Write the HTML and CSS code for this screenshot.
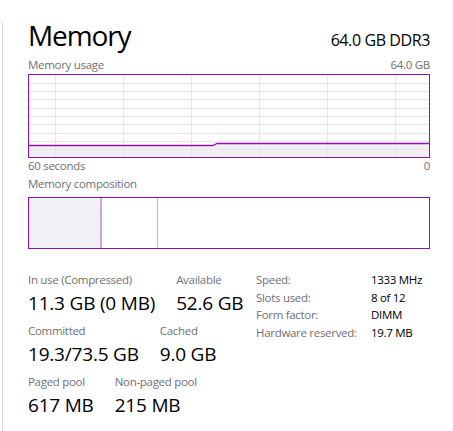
FILE: index.html
```html
<!DOCTYPE html>
<html>
<head>
<meta charset="utf-8">
<link rel="stylesheet" href="styles.css">
</head>
<body>
<div class="panel">
  <div class="head">
    <span class="title">Memory</span>
    <span class="sub">64.0 GB DDR3</span>
  </div>
  <div class="caption caption-top">
    <span>Memory usage</span>
    <span>64.0 GB</span>
  </div>
  <div class="chart">
    <svg width="400" height="82" viewBox="0 0 400 82">
      <path class="area" d="M0,70.5 L184,70.5 L188,68.5 L400,68.5 L400,82 L0,82 Z"/>
      <g class="grid">
        <line x1="26.5" y1="0" x2="26.5" y2="82"/>
        <line x1="94.5" y1="0" x2="94.5" y2="82"/>
        <line x1="162.5" y1="0" x2="162.5" y2="82"/>
        <line x1="230.5" y1="0" x2="230.5" y2="82"/>
        <line x1="298.5" y1="0" x2="298.5" y2="82"/>
        <line x1="366.5" y1="0" x2="366.5" y2="82"/>
        <line x1="0" y1="8.5" x2="400" y2="8.5"/>
        <line x1="0" y1="16.5" x2="400" y2="16.5"/>
        <line x1="0" y1="24.5" x2="400" y2="24.5"/>
        <line x1="0" y1="33.5" x2="400" y2="33.5"/>
        <line x1="0" y1="41.5" x2="400" y2="41.5"/>
        <line x1="0" y1="49.5" x2="400" y2="49.5"/>
        <line x1="0" y1="58.5" x2="400" y2="58.5"/>
        <line x1="0" y1="66.5" x2="400" y2="66.5"/>
        <line x1="0" y1="74.5" x2="400" y2="74.5"/>
      </g>
      <path class="usage" d="M0,70.5 L184,70.5 L188,68.5 L400,68.5"/>
    </svg>
  </div>
  <div class="caption caption-axis">
    <span>60 seconds</span>
    <span>0</span>
  </div>
  <div class="caption caption-comp">
    <span>Memory composition</span>
  </div>
  <div class="comp">
    <div class="seg-inuse"></div>
    <div class="seg-modified"></div>
    <div class="seg-standby"></div>
    <div class="seg-free"></div>
  </div>
  <div class="stats">
    <div class="stat-cols">
      <div class="stat-row">
        <div class="stat"><div class="label">In use (Compressed)</div><div class="value">11.3 GB (0 MB)</div></div>
        <div class="stat"><div class="label">Available</div><div class="value">52.6 GB</div></div>
      </div>
      <div class="stat-row">
        <div class="stat"><div class="label">Committed</div><div class="value">19.3/73.5 GB</div></div>
        <div class="stat"><div class="label">Cached</div><div class="value">9.0 GB</div></div>
      </div>
      <div class="stat-row">
        <div class="stat"><div class="label">Paged pool</div><div class="value">617 MB</div></div>
        <div class="stat"><div class="label">Non-paged pool</div><div class="value">215 MB</div></div>
      </div>
    </div>
    <div class="specs">
      <span class="spec-k">Speed:</span><span class="spec-v">1333 MHz</span>
      <span class="spec-k">Slots used:</span><span class="spec-v">8 of 12</span>
      <span class="spec-k">Form factor:</span><span class="spec-v">DIMM</span>
      <span class="spec-k">Hardware reserved:</span><span class="spec-v">19.7 MB</span>
    </div>
  </div>
</div>
</body>
</html>
```
FILE: styles.css
```css
html, body {
  margin: 0;
  padding: 0;
  background: #ffffff;
}
body {
  font-family: "Open Sans", "Noto Sans", sans-serif;
  color: #000;
}
.panel {
  margin: 22px 0 0 2px;
  border-left: 1px solid #dadada;
  padding-left: 25px;
  width: 402px;
  height: 409px;
}
.head {
  display: flex;
  justify-content: space-between;
  align-items: baseline;
  height: 26px;
  line-height: 26px;
}
.title {
  font-size: 28px;
  letter-spacing: -1.1px;
}
.sub {
  font-size: 16px;
  letter-spacing: -0.4px;
}
.caption {
  display: flex;
  justify-content: space-between;
  font-size: 11.5px;
  letter-spacing: -0.3px;
  line-height: 16px;
  color: #707070;
}
.caption-top {
  margin-top: 9px;
  margin-bottom: 1px;
}
.caption-axis {
  line-height: 15px;
}
.caption-comp {
  margin-top: 3px;
  margin-bottom: 5px;
}
.chart {
  border: 1px solid #8b12ae;
  height: 82px;
}
.chart svg {
  display: block;
}
.area {
  fill: #f1eff3;
}
.grid line {
  stroke: #ecdff0;
  stroke-width: 1;
}
.usage {
  fill: none;
  stroke: #8b12ae;
  stroke-width: 1.3;
}
.comp {
  display: flex;
  border: 1px solid #8b12ae;
  height: 50px;
}
.seg-inuse {
  width: 71px;
  background: #f3f0f5;
}
.seg-modified {
  width: 2px;
  background: #cba8da;
}
.seg-standby {
  width: 55px;
  border-right: 1px solid #cdb0da;
}
.seg-free {
  flex: 1;
}
.stats {
  display: flex;
  align-items: flex-start;
  margin-top: 23px;
}
.stat-cols {
  width: 228px;
  display: flex;
  flex-direction: column;
  gap: 5px;
}
.stat-row {
  display: flex;
  gap: 21px;
}
.label {
  font-size: 11.5px;
  letter-spacing: -0.3px;
  line-height: 16px;
  color: #707070;
  white-space: nowrap;
}
.value {
  font-size: 19px;
  letter-spacing: -0.2px;
  line-height: 30px;
  white-space: nowrap;
}
.specs {
  display: grid;
  grid-template-columns: 115px auto;
  align-content: start;
  font-size: 11.5px;
  letter-spacing: -0.3px;
  line-height: 17.7px;
  margin-top: -1px;
}
.spec-k {
  color: #707070;
}
.spec-v {
  color: #000;
}
```
